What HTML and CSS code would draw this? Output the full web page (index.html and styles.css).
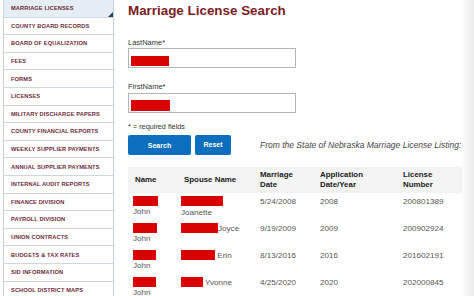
FILE: index.html
```html
<!DOCTYPE html>
<html>
<head>
<meta charset="utf-8">
<link rel="stylesheet" href="styles.css">
</head>
<body>
<div class="page">
  <nav class="sidebar">
    <a class="nav-item active">MARRIAGE LICENSES<span class="corner"></span></a>
    <a class="nav-item">COUNTY BOARD RECORDS</a>
    <a class="nav-item">BOARD OF EQUALIZATION</a>
    <a class="nav-item">FEES</a>
    <a class="nav-item">FORMS</a>
    <a class="nav-item">LICENSES</a>
    <a class="nav-item">MILITARY DISCHARGE PAPERS</a>
    <a class="nav-item">COUNTY FINANCIAL REPORTS</a>
    <a class="nav-item">WEEKLY SUPPLIER PAYMENTS</a>
    <a class="nav-item">ANNUAL SUPPLIER PAYMENTS</a>
    <a class="nav-item">INTERNAL AUDIT REPORTS</a>
    <a class="nav-item">FINANCE DIVISION</a>
    <a class="nav-item">PAYROLL DIVISION</a>
    <a class="nav-item">UNION CONTRACTS</a>
    <a class="nav-item">BUDGETS &amp; TAX RATES</a>
    <a class="nav-item">SID INFORMATION</a>
    <a class="nav-item">SCHOOL DISTRICT MAPS</a>
  </nav>
  <main class="main">
    <h1 class="title">Marriage License Search</h1>
    <div class="field">
      <label class="label">LastName*</label>
      <div class="input"><span class="redact r-input"></span></div>
    </div>
    <div class="field second">
      <label class="label">FirstName*</label>
      <div class="input"><span class="redact r-input2"></span></div>
    </div>
    <div class="note">* = required fields</div>
    <div class="actions">
      <button class="btn btn-search">Search</button>
      <button class="btn btn-reset">Reset</button>
      <span class="source">From the State of Nebraska Marriage License Listing:</span>
    </div>
    <table class="results">
      <thead>
        <tr>
          <th class="c-name">Name</th>
          <th class="c-spouse">Spouse Name</th>
          <th class="c-date">Marriage<br>Date</th>
          <th class="c-app">Application<br>Date/Year</th>
          <th class="c-num">License<br>Number</th>
        </tr>
      </thead>
      <tbody>
        <tr>
          <td><span class="redact r-name" style="width:25px"></span>John</td>
          <td><span class="redact r-sp" style="width:42px"></span> Joanette</td>
          <td>5/24/2008</td>
          <td>2008</td>
          <td>200801389</td>
        </tr>
        <tr>
          <td><span class="redact r-name" style="width:24px"></span>John</td>
          <td><span class="redact r-sp" style="width:37px"></span>Joyce</td>
          <td>9/19/2009</td>
          <td>2009</td>
          <td>200902924</td>
        </tr>
        <tr>
          <td><span class="redact r-name" style="width:23px"></span>John</td>
          <td><span class="redact r-sp" style="width:34px"></span> Erin</td>
          <td>8/13/2016</td>
          <td>2016</td>
          <td>201602191</td>
        </tr>
        <tr>
          <td><span class="redact r-name" style="width:23px"></span>John</td>
          <td><span class="redact r-sp" style="width:22px"></span> Yvonne</td>
          <td>4/25/2020</td>
          <td>2020</td>
          <td>202000845</td>
        </tr>
      </tbody>
    </table>
  </main>
  <div class="edge"></div>
</div>
</body>
</html>
```
FILE: styles.css
```css
html, body {
  margin: 0;
  padding: 0;
  background: #fff;
  overflow: hidden;
  height: 296px;
}
body {
  font-family: "Liberation Sans", Arial, sans-serif;
}
.page {
  display: flex;
  align-items: flex-start;
  height: 296px;
}
.sidebar {
  margin-left: 3px;
  width: 109px;
  flex: none;
  border-left: 1px solid #c9d1d8;
  border-right: 1px solid #c9d1d8;
  display: flex;
  flex-direction: column;
}
.nav-item {
  position: relative;
  display: flex;
  align-items: center;
  box-sizing: border-box;
  height: 17.6px;
  padding-left: 7px;
  border-bottom: 1px solid #cfd6dc;
  font-size: 5.7px;
  font-weight: bold;
  color: #6e2a3a;
  letter-spacing: 0.1px;
  white-space: nowrap;
}
.nav-item.active {
  background: #e5eef4;
}
.corner {
  position: absolute;
  right: 0;
  bottom: 0;
  width: 0;
  height: 0;
  border-left: 5px solid transparent;
  border-bottom: 5px solid #1c3f66;
}
.main {
  flex: 1;
  padding-left: 14px;
  min-width: 0;
}
.title {
  margin: 2px 0 0 0;
  font-size: 13.4px;
  line-height: 18px;
  font-weight: bold;
  color: #7a1c1f;
}
.field {
  display: flex;
  flex-direction: column;
}
.label {
  font-size: 7.5px;
  color: #333;
  line-height: 10px;
  margin-top: 18px;
  margin-bottom: 0;
}
.second .label {
  margin-top: 14px;
  margin-bottom: 1px;
}
.input {
  box-sizing: border-box;
  width: 168px;
  height: 20px;
  border: 1px solid #b5b5b5;
  padding: 3px 0 0 2px;
}
.redact {
  display: inline-block;
  background: #d90000;
  height: 10px;
}
.r-input { width: 38px; }
.r-input2 { width: 39px; height: 11px; }
.note {
  font-size: 7.3px;
  color: #333;
  margin-top: 9px;
  line-height: 10px;
}
.actions {
  display: flex;
  align-items: center;
  margin-top: 3px;
}
.btn {
  border: none;
  border-radius: 2px;
  background: #0b6ebe;
  color: #fff;
  font-family: "Liberation Sans", Arial, sans-serif;
  font-weight: bold;
  font-size: 7px;
  height: 20px;
  padding: 0;
}
.btn-search { width: 63px; }
.btn-reset { width: 36px; margin-left: 4px; margin-top: -1px; }
.source {
  margin-left: 29px;
  font-style: italic;
  font-size: 8.5px;
  color: #444;
  white-space: nowrap;
}
.results {
  margin-top: 12px;
  width: 336px;
  border-collapse: collapse;
  table-layout: fixed;
}
.results th {
  background: #f3f3f3;
  text-align: left;
  font-size: 7.9px;
  font-weight: bold;
  color: #222;
  height: 26px;
  padding: 0 0 0 7px;
  line-height: 10px;
}
.c-name { width: 42px; }
.c-spouse { width: 69px; }
.c-date { width: 53px; }
.c-app { width: 76px; }
.results td {
  vertical-align: top;
  font-size: 8.1px;
  color: #555;
  padding: 3px 0 0 7px;
  height: 24px;
  line-height: 11px;
  white-space: normal;
}
.results td:first-child {
  padding-left: 5px;
}
.results td:nth-child(2) {
  padding-left: 4px;
}
.r-name {
  display: block;
  height: 10px;
  margin-bottom: 0;
}
.r-sp {
  vertical-align: middle;
  margin-top: -1px;
}
.edge {
  flex: none;
  width: 12px;
  height: 296px;
  background: linear-gradient(to right, #fdfdfd, #ebebeb);
}
```
